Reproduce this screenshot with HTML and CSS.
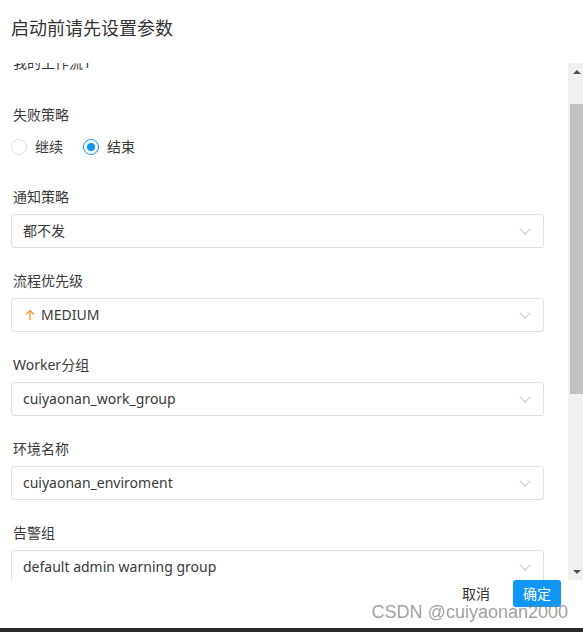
FILE: index.html
```html
<!DOCTYPE html>
<html lang="zh-CN">
<head>
<meta charset="utf-8">
<title>启动前请先设置参数</title>
<link rel="stylesheet" href="styles.css">
</head>
<body>
<div class="dialog">
  <div class="header">启动前请先设置参数</div>
  <div class="body">
    <div class="content">
      <div class="value-text">我的工作流1</div>

      <div class="item item-radio">
        <div class="label">失败策略</div>
        <div class="radios">
          <label class="radio"><span class="circle"></span><span class="rtext">继续</span></label>
          <label class="radio checked"><span class="circle"></span><span class="rtext">结束</span></label>
        </div>
      </div>

      <div class="item">
        <div class="label">通知策略</div>
        <div class="select"><span class="val">都不发</span><span class="chev"></span></div>
      </div>

      <div class="item">
        <div class="label">流程优先级</div>
        <div class="select"><span class="val"><svg class="arrow" width="10" height="12" viewBox="0 0 10 12"><path d="M5 11V1.5M1 5.5L5 1.5L9 5.5" fill="none" stroke="#ff9a3c" stroke-width="1.4"/></svg>MEDIUM</span><span class="chev"></span></div>
      </div>

      <div class="item">
        <div class="label">Worker分组</div>
        <div class="select"><span class="val">cuiyaonan_work_group</span><span class="chev"></span></div>
      </div>

      <div class="item">
        <div class="label">环境名称</div>
        <div class="select"><span class="val">cuiyaonan_enviroment</span><span class="chev"></span></div>
      </div>

      <div class="item">
        <div class="label">告警组</div>
        <div class="select"><span class="val">default admin warning group</span><span class="chev"></span></div>
      </div>
    </div>
    <div class="scrollbar">
      <div class="sb-btn"><span class="tri-up"></span></div>
      <div class="sb-space"></div>
      <div class="sb-thumb"></div>
      <div class="sb-fill"></div>
      <div class="sb-btn"><span class="tri-down"></span></div>
    </div>
  </div>
  <div class="footer">
    <span class="btn-cancel">取消</span>
    <span class="btn-ok">确定</span>
  </div>
  <div class="taskbar"></div>
  <div class="watermark">CSDN @cuiyaonan2000</div>
</div>
</body>
</html>
```

FILE: styles.css
```css
* { box-sizing: border-box; }
html, body {
  margin: 0;
  padding: 0;
  background: #fff;
}
body {
  width: 583px;
  height: 632px;
  overflow: hidden;
  font-family: "Noto Sans", "Noto Sans CJK SC", sans-serif;
  color: #3a3a3a;
  font-size: 14px;
}
.dialog {
  position: relative;
  width: 583px;
  height: 632px;
  display: flex;
  flex-direction: column;
}
.header {
  height: 63px;
  padding: 16px 0 0 11px;
  font-size: 18px;
  line-height: 24px;
  color: #333;
}
.body {
  height: 517px;
  display: flex;
}
.content {
  flex: 1;
  overflow: hidden;
  padding: 0 24px 0 11px;
}
.value-text {
  margin-top: -10px;
  line-height: 20px;
  padding-left: 2px;
}
.item {
  margin-top: 23px;
}
.item-radio {
  margin-top: 32px;
}
.label {
  line-height: 20px;
  padding-left: 2px;
  margin-bottom: 7px;
}
.item-radio + .item {
  margin-top: 25px;
}
.radios {
  display: flex;
  align-items: center;
  height: 30px;
}
.radio {
  display: flex;
  align-items: center;
  margin-right: 20px;
}
.circle {
  width: 16px;
  height: 16px;
  border-radius: 50%;
  border: 1px solid #dcdfe6;
  background: #fff;
  display: flex;
  align-items: center;
  justify-content: center;
}
.checked .circle {
  border: 1.5px solid #0f96f7;
}
.checked .circle::after {
  content: "";
  width: 8px;
  height: 8px;
  border-radius: 50%;
  background: #0f96f7;
}
.rtext {
  margin-left: 8px;
  line-height: 20px;
}
.select {
  height: 34px;
  border: 1px solid #e0e0e6;
  border-radius: 3px;
  display: flex;
  align-items: center;
  justify-content: space-between;
  padding: 0 12px 0 11px;
}
.val {
  display: flex;
  align-items: center;
  line-height: 20px;
  margin-top: -1px;
}
.arrow {
  margin: 0 6px 0 2px;
}
.chev {
  width: 8px;
  height: 8px;
  border-right: 1px solid #c8cad0;
  border-bottom: 1px solid #c8cad0;
  transform: rotate(45deg);
  margin-top: -4px;
  margin-right: 2px;
}
.scrollbar {
  width: 15px;
  background: #f1f1f1;
  display: flex;
  flex-direction: column;
}
.sb-btn {
  height: 17px;
  display: flex;
  align-items: center;
  justify-content: center;
  padding-left: 2px;
}
.tri-up {
  width: 0;
  height: 0;
  border-left: 4px solid transparent;
  border-right: 4px solid transparent;
  border-bottom: 4px solid #505050;
}
.tri-down {
  width: 0;
  height: 0;
  border-left: 4px solid transparent;
  border-right: 4px solid transparent;
  border-top: 4px solid #505050;
}
.sb-space {
  height: 24px;
}
.sb-thumb {
  height: 290px;
  margin-left: 2px;
  background: #c1c1c1;
}
.sb-fill {
  flex: 1;
}
.footer {
  height: 48px;
  display: flex;
  justify-content: flex-end;
  align-items: flex-start;
  padding-right: 22px;
}
.btn-cancel {
  line-height: 27px;
  margin-right: 23px;
  color: #333;
}
.btn-ok {
  height: 27px;
  width: 48px;
  line-height: 27px;
  text-align: center;
  color: #fff;
  background: #0f96f7;
  border-radius: 3px;
}
.taskbar {
  height: 4px;
  background: #2c2a27;
}
.watermark {
  position: absolute;
  right: 15px;
  top: 600px;
  font-family: "Liberation Sans", Arial, sans-serif;
  font-size: 18px;
  line-height: 24px;
  color: rgba(130, 130, 130, 0.75);
}
```
